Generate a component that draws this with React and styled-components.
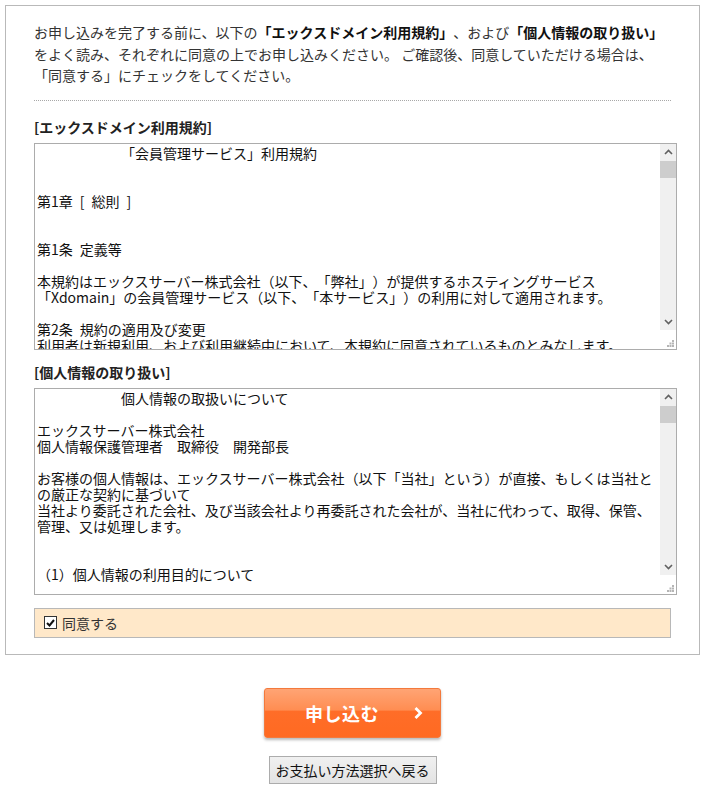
import React from "react";
import styled, { createGlobalStyle } from "styled-components";

const GlobalStyle = createGlobalStyle`
  body {
    margin: 0;
    background: #ffffff;
    font-family: "Noto Sans CJK JP", "Noto Sans", sans-serif;
    color: #333333;
    text-spacing-trim: space-all;
  }
`;

const TERMS = `　　　　　　「会員管理サービス」利用規約


第1章\u2002[\u2002総則\u2002]


第1条\u2002定義等

本規約はエックスサーバー株式会社（以下、「弊社」）が提供するホスティングサービス
「Xdomain」の会員管理サービス（以下、「本サービス」）の利用に対して適用されます。

第2条\u2002規約の適用及び変更
利用者は新規利用、および利用継続中において、本規約に同意されているものとみなします。
`;

const PRIVACY = `　　　　　　個人情報の取扱いについて

エックスサーバー株式会社
個人情報保護管理者　取締役　開発部長

お客様の個人情報は、エックスサーバー株式会社（以下「当社」という）が直接、もしくは当社と
の厳正な契約に基づいて
当社より委託された会社、及び当該会社より再委託された会社が、当社に代わって、取得、保管、
管理、又は処理します。


（1）個人情報の利用目的について

当社は、お客様の個人情報を以下の目的で利用いたします。
`;

function Chevron({ down }) {
  return (
    <svg width="9" height="6" viewBox="0 0 9 6">
      <polyline
        points={down ? "1,1 4.5,4.5 8,1" : "1,5 4.5,1.5 8,5"}
        fill="none"
        stroke="#606060"
        strokeWidth="1.6"
      />
    </svg>
  );
}

function Grip() {
  return (
    <svg width="7" height="7" viewBox="0 0 7 7">
      <rect x="5" y="0" width="2" height="2" fill="#b5b5b5" />
      <rect x="2.5" y="2.5" width="2" height="2" fill="#b5b5b5" />
      <rect x="5" y="2.5" width="2" height="2" fill="#b5b5b5" />
      <rect x="0" y="5" width="2" height="2" fill="#b5b5b5" />
      <rect x="2.5" y="5" width="2" height="2" fill="#b5b5b5" />
      <rect x="5" y="5" width="2" height="2" fill="#b5b5b5" />
    </svg>
  );
}

function TermsBox({ text }) {
  return (
    <Box>
      <BoxText>{text}</BoxText>
      <Rail>
        <RailButton>
          <Chevron />
        </RailButton>
        <Track>
          <Thumb />
        </Track>
        <RailButton>
          <Chevron down />
        </RailButton>
        <Corner>
          <Grip />
        </Corner>
      </Rail>
    </Box>
  );
}

export default function App() {
  return (
    <Page>
      <GlobalStyle />
      <Panel>
        <Intro>
          お申し込みを完了する前に、以下の<b>「エックスドメイン利用規約」</b>、および
          <b>「個人情報の取り扱い」</b>
          <br />
          をよく読み、それぞれに同意の上でお申し込みください。 ご確認後、同意していただける場合は、
          <br />
          「同意する」にチェックをしてください。
        </Intro>
        <Divider />
        <SectionTitle>[エックスドメイン利用規約]</SectionTitle>
        <TermsBox text={TERMS} />
        <SectionTitle $spaced>[個人情報の取り扱い]</SectionTitle>
        <TermsBox text={PRIVACY} />
        <AgreeRow>
          <CheckMark>
            <svg width="9" height="8" viewBox="0 0 9 8">
              <polyline
                points="1,4 3.5,6.5 8,1"
                fill="none"
                stroke="#111"
                strokeWidth="2"
              />
            </svg>
          </CheckMark>
          <span>同意する</span>
        </AgreeRow>
      </Panel>
      <Actions>
        <SubmitButton>
          <span>申し込む</span>
          <svg width="10" height="14" viewBox="0 0 10 14">
            <polyline
              points="2.5,2 7.5,7 2.5,12"
              fill="none"
              stroke="#fff"
              strokeWidth="2.8"
            />
          </svg>
        </SubmitButton>
        <BackButton>お支払い方法選択へ戻る</BackButton>
      </Actions>
    </Page>
  );
}

const Page = styled.div`
  padding: 5px;
`;

const Panel = styled.div`
  width: 695px;
  box-sizing: border-box;
  border: 1px solid #b9b9b9;
  padding: 16px 28px 16px 28px;
`;

const Intro = styled.p`
  margin: 0;
  font-size: 14px;
  line-height: 21.5px;
  color: #333;
  white-space: nowrap;
  b {
    color: #111;
    font-weight: bold;
  }
`;

const Divider = styled.div`
  margin-top: 13px;
  border-top: 1px dotted #a8a8a8;
`;

const SectionTitle = styled.div`
  margin-top: ${(p) => (p.$spaced ? "12px" : "16px")};
  margin-bottom: 6px;
  font-size: 14px;
  line-height: 20px;
  font-weight: bold;
  color: #222;
`;

const Box = styled.div`
  display: flex;
  width: 643px;
  height: 207px;
  box-sizing: border-box;
  border: 1px solid #acacac;
  background: #fff;
`;

const BoxText = styled.div`
  flex: 1;
  padding: 1px 2px;
  overflow: hidden;
  white-space: pre-wrap;
  font-size: 14px;
  line-height: 16px;
  color: #111;
`;

const Rail = styled.div`
  width: 16px;
  display: flex;
  flex-direction: column;
  background: #f0f0f0;
`;

const RailButton = styled.div`
  height: 16px;
  display: flex;
  align-items: center;
  justify-content: center;
`;

const Track = styled.div`
  flex: 1;
  padding-top: 1px;
`;

const Thumb = styled.div`
  height: 17px;
  background: #cdcdcd;
`;

const Corner = styled.div`
  height: 17px;
  display: flex;
  align-items: flex-end;
  justify-content: flex-end;
  padding: 0 2px 2px 0;
  background: #fff;
`;

const AgreeRow = styled.label`
  margin-top: 13px;
  height: 30px;
  box-sizing: border-box;
  display: flex;
  align-items: center;
  gap: 5px;
  padding-left: 9px;
  background: #ffe8c9;
  border: 1px solid #b8b8b8;
  font-size: 14px;
  color: #333;
`;

const CheckMark = styled.span`
  width: 13px;
  height: 13px;
  flex-shrink: 0;
  box-sizing: border-box;
  border: 1px solid #333;
  background: #fff;
  display: flex;
  align-items: center;
  justify-content: center;
`;

const Actions = styled.div`
  width: 695px;
  display: flex;
  flex-direction: column;
  align-items: center;
  margin-top: 33px;
  gap: 18px;
`;

const SubmitButton = styled.button`
  width: 177px;
  height: 50px;
  box-sizing: border-box;
  display: flex;
  align-items: center;
  justify-content: space-between;
  padding: 0 17px 0 40px;
  border: 1px solid #f3793c;
  border-radius: 3px;
  background: linear-gradient(
    #ffa474 0%,
    #ff8d52 44%,
    #ff6d28 46%,
    #ff6a22 100%
  );
  box-shadow: 0 2px 3px rgba(0, 0, 0, 0.28);
  color: #fff;
  font-family: "Noto Sans CJK JP", sans-serif;
  font-size: 18px;
  font-weight: bold;
  letter-spacing: 0.5px;
  cursor: pointer;
`;

const BackButton = styled.button`
  width: 168px;
  height: 28px;
  box-sizing: border-box;
  padding: 0;
  border: 1px solid #acacac;
  background: linear-gradient(#f0f0f0, #e3e3e3);
  font-family: "Noto Sans CJK JP", sans-serif;
  font-size: 14px;
  color: #111;
  cursor: pointer;
`;
